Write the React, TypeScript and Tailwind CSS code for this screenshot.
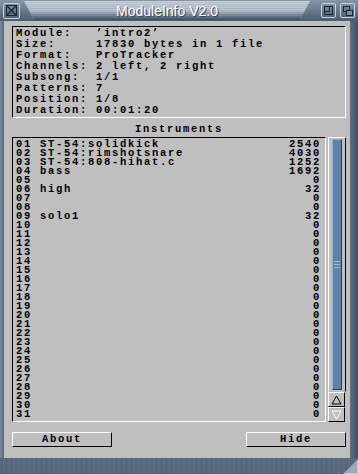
const info: [string, string][] = [
  ['Module:', '’intro2’'],
  ['Size:', '17830 bytes in 1 file'],
  ['Format:', 'ProTracker'],
  ['Channels:', '2 left, 2 right'],
  ['Subsong:', '1/1'],
  ['Patterns:', '7'],
  ['Position:', '1/8'],
  ['Duration:', '00:01:20'],
];

const named: Record<number, [string, number]> = {
  1: ['ST-54:solidkick', 2540],
  2: ['ST-54:rimshotsnare', 4030],
  3: ['ST-54:808-hihat.c', 1252],
  4: ['bass', 1692],
  6: ['high', 32],
  9: ['solo1', 32],
};

const instruments = Array.from({ length: 31 }, (_, i) => {
  const n = i + 1;
  const entry = named[n];
  return {
    num: String(n).padStart(2, '0'),
    name: entry ? entry[0] : '',
    size: entry ? entry[1] : 0,
  };
});

const mono = "font-['Liberation_Mono',monospace] font-bold text-[10.5px] tracking-[1.7px] text-black";

function ArrowButton({ up }: { up: boolean }) {
  return (
    <div className="flex h-[15px] w-[17px] items-center justify-center border border-t-white border-l-white border-r-black border-b-black bg-[#bfbfbf]">
      <svg width="11" height="10" viewBox="0 0 11 10">
        <polygon
          points={up ? '5.5,1 1,9 10,9' : '1,1 10,1 5.5,9'}
          fill="none"
          stroke={up ? '#000' : '#fff'}
          strokeWidth="1"
        />
      </svg>
    </div>
  );
}

export default function App() {
  return (
    <div className="flex h-[474px] w-[358px] flex-col overflow-hidden bg-[#4e5f75]">
      {/* title bar */}
      <div className="relative flex h-[21px] items-center bg-gradient-to-b from-[#8797ab] to-[#4b5c71]">
        <div className="ml-[3px] flex h-[16px] w-[17px] items-center justify-center rounded-[2px] border border-[#c9d1da] bg-gradient-to-b from-[#7d8ea3] to-[#53647a]">
          <svg width="11" height="11" viewBox="0 0 11 11">
            <path d="M1 1 L10 10 M10 1 L1 10" stroke="#1c2530" strokeWidth="1.3" />
            <rect x="0.5" y="0.5" width="10" height="10" fill="none" stroke="#1c2530" />
          </svg>
        </div>
        <div className="ml-[4px] flex h-[19px] flex-1 items-center justify-center bg-[repeating-linear-gradient(180deg,#bcc6d1_0px,#bcc6d1_1px,#a6b2bf_1px,#a6b2bf_2px)] [clip-path:polygon(0_0,100%_0,calc(100%-10px)_100%,10px_100%)]">
          <div className="flex h-full w-full items-center justify-center bg-gradient-to-b from-[#ffffff33] via-[#00000000] to-[#3a4a5f]">
            <span className="font-['Liberation_Sans',sans-serif] text-[14px] leading-none text-white [text-shadow:1px_1px_0_#3b4a5d]">
              ModuleInfo V2.0
            </span>
          </div>
        </div>
        <div className="ml-[11px] flex h-[15px] w-[15px] items-center justify-center rounded-[2px] border border-[#c9d1da] bg-gradient-to-b from-[#7d8ea3] to-[#53647a]">
          <svg width="9" height="9" viewBox="0 0 9 9">
            <rect x="0.5" y="0.5" width="8" height="8" fill="none" stroke="#1c2530" />
            <path d="M5.5 0.5 V5.5 H0.5" fill="none" stroke="#1c2530" />
          </svg>
        </div>
        <div className="ml-[4px] mr-[3px] flex h-[15px] w-[15px] items-center justify-center rounded-[2px] border border-[#c9d1da] bg-gradient-to-b from-[#7d8ea3] to-[#53647a]">
          <svg width="10" height="10" viewBox="0 0 10 10">
            <rect x="0.5" y="0.5" width="6" height="5" fill="none" stroke="#1c2530" />
            <rect x="3.5" y="4.5" width="6" height="5" fill="#7d8ea3" stroke="#1c2530" />
          </svg>
        </div>
      </div>

      {/* middle */}
      <div className="flex flex-1">
        <div className="w-[4px] bg-gradient-to-r from-[#7a8aa0] to-[#56677e]" />
        <div className="flex flex-1 flex-col bg-[#bfbfbf] pl-[8px] pr-[4px] pt-[5px]">
          {/* info box */}
          <div className="border border-t-black border-l-black border-r-white border-b-white px-[3px] pt-[1px] pb-[1px]">
            {info.map(([k, v]) => (
              <div key={k} className={`${mono} h-[11px] whitespace-pre leading-[11px]`}>
                {k.padEnd(10, ' ')}
                {v}
              </div>
            ))}
          </div>

          <div className={`${mono} mt-[3px] h-[16px] text-center leading-[16px]`}>Instruments</div>

          <div className="flex h-[285px] gap-[2px]">
            {/* list */}
            <div className="flex-1 border border-t-black border-l-black border-r-white border-b-white pl-[3px] pr-[4px] pt-[2px]">
              {instruments.map((ins) => (
                <div key={ins.num} className={`${mono} flex h-[9px] whitespace-pre leading-[9px]`}>
                  <span>{ins.num} </span>
                  <span className="flex-1">{ins.name}</span>
                  <span>{ins.size}</span>
                </div>
              ))}
            </div>
            {/* scrollbar */}
            <div className="flex w-[18px] flex-col">
              <div className="flex flex-1 border border-l-white border-t-white border-r-black border-b-[#bfbfbf] px-[3px] py-[1px]">
                <div className="flex flex-1 items-center justify-center border border-l-[#8fb0d2] border-t-[#8fb0d2] border-r-[#2c3f57] border-b-[#2c3f57] bg-[#5f82a8]">
                  <div className="flex flex-col gap-[2px]">
                    <div className="h-[1px] w-[6px] bg-[#9fbbd8]" />
                    <div className="h-[1px] w-[6px] bg-[#9fbbd8]" />
                    <div className="h-[1px] w-[6px] bg-[#9fbbd8]" />
                  </div>
                </div>
              </div>
              <ArrowButton up />
              <ArrowButton up={false} />
            </div>
          </div>

          {/* buttons */}
          <div className="mt-[10px] flex justify-between">
            <div className={`${mono} flex h-[15px] w-[100px] items-center justify-center border border-t-white border-l-white border-r-black border-b-black`}>
              About
            </div>
            <div className={`${mono} flex h-[15px] w-[100px] items-center justify-center border border-t-white border-l-white border-r-black border-b-black`}>
              Hide
            </div>
          </div>
        </div>
        <div className="w-[8px] bg-gradient-to-r from-[#5d6e85] to-[#3f4f63]" />
      </div>

      {/* bottom border */}
      <div className="relative flex h-[16px] justify-end bg-[repeating-linear-gradient(90deg,#56677d_0px,#56677d_3px,#5b6c83_3px,#5b6c83_5px)]">
        <svg width="15" height="15" viewBox="0 0 15 15" className="mt-[1px]">
          <polygon points="15,0 15,15 0,15" fill="#9aa9bb" />
          <path d="M14.5 1 V14.5 H1" fill="none" stroke="#c6d0da" />
        </svg>
      </div>
    </div>
  );
}
